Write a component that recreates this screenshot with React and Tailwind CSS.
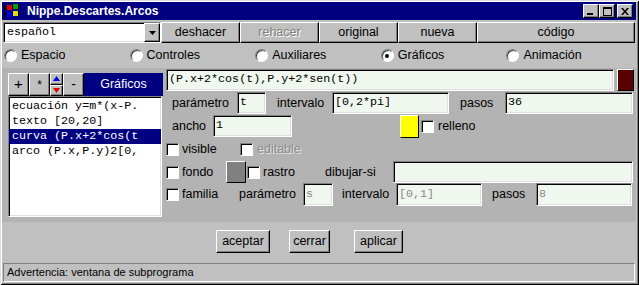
const raised =
  'bg-[#c0c0c0] border border-t-white border-l-white border-r-black border-b-black shadow-[inset_-1px_-1px_0_#808080]'
const sunken =
  'border border-t-[#808080] border-l-[#808080] border-r-white border-b-white shadow-[inset_1px_1px_0_#000,inset_-1px_-1px_0_#dfdfdf]'
const mono = "font-['Liberation_Mono',monospace] text-[11.7px]"

function Field({ className = '', children, disabled }) {
  return (
    <div
      className={`${sunken} bg-[#f0f7ef] flex items-center pl-[2px] ${mono} ${
        disabled ? 'text-[#8a8a8a]' : 'text-black'
      } ${className}`}
    >
      {children}
    </div>
  )
}

function Check() {
  return (
    <span className="block h-[13px] w-[13px] shrink-0 border border-t-[#808080] border-l-[#808080] border-r-white border-b-white bg-white shadow-[inset_1px_1px_0_#000]" />
  )
}

function Radio({ label, checked }) {
  return (
    <div className="flex items-center gap-[4px] pl-[1px]">
      <span className="flex h-[13px] w-[13px] items-center justify-center rounded-full border border-t-[#808080] border-l-[#808080] border-r-white border-b-white bg-white shadow-[inset_1px_1px_0_#404040]">
        {checked ? <span className="h-[4px] w-[4px] rounded-full bg-black" /> : null}
      </span>
      <span>{label}</span>
    </div>
  )
}

function Button({ className = '', children, disabled }) {
  return (
    <div className={`${raised} flex items-center justify-center ${className}`}>
      <span className={disabled ? 'text-[#808080] [text-shadow:1px_1px_0_#fff]' : ''}>
        {children}
      </span>
    </div>
  )
}

function WinIcon() {
  return (
    <svg width="16" height="14" viewBox="0 0 16 14">
      <rect x="0" y="1" width="2" height="5" fill="#000" />
      <rect x="3" y="1" width="5" height="5" fill="#e00000" />
      <rect x="9" y="0" width="5" height="5" fill="#00a000" />
      <rect x="0" y="8" width="2" height="5" fill="#000" />
      <rect x="3" y="8" width="5" height="5" fill="#0000e0" />
      <rect x="9" y="7" width="5" height="5" fill="#e0e000" />
      <rect x="14" y="0" width="1" height="12" fill="#000" />
    </svg>
  )
}

export default function App() {
  return (
    <div className="flex h-[285px] w-[639px] flex-col bg-[#c0c0c0] pl-[2px] pr-[3px] pt-[2px] pb-[2px] font-['Liberation_Sans',Arial,sans-serif] text-[12.5px] text-black shadow-[inset_1px_1px_0_#dfdfdf,inset_-1px_-1px_0_#000,inset_2px_2px_0_#fff,inset_-2px_-2px_0_#808080]">
      {/* title bar */}
      <div className="flex h-[18px] shrink-0 items-center bg-[#000080] pl-[2px] pr-[3px]">
        <WinIcon />
        <span className="ml-[7px] text-[12px] font-bold text-white">Nippe.Descartes.Arcos</span>
        <div className="ml-auto flex">
          <div className={`${raised} flex h-[14px] w-[16px] items-end pb-[2px] pl-[3px]`}>
            <span className="block h-[2px] w-[6px] bg-black" />
          </div>
          <div className={`${raised} flex h-[14px] w-[16px] items-center justify-center`}>
            <span className="block h-[9px] w-[9px] border border-t-2 border-black" />
          </div>
          <div className={`${raised} ml-[2px] flex h-[14px] w-[16px] items-center justify-center`}>
            <svg width="8" height="7" viewBox="0 0 8 7">
              <path d="M0 0h2l2 2.5L6 0h2L5 3.5 8 7H6L4 4.5 2 7H0l3-3.5z" fill="#000" />
            </svg>
          </div>
        </div>
      </div>

      {/* toolbar */}
      <div className="mt-[2px] flex h-[21px] shrink-0 px-[1px]">
        <div className={`${sunken} flex w-[158px] items-center bg-white`}>
          <span className={`${mono} flex-1 pl-[3px]`}>español</span>
          <div className={`${raised} flex h-full w-[16px] items-center justify-center`}>
            <svg width="7" height="4" viewBox="0 0 7 4">
              <path d="M0 0h7L3.5 4z" fill="#000" />
            </svg>
          </div>
        </div>
        <Button className="w-[79px]">deshacer</Button>
        <Button className="w-[79px]" disabled>
          rehacer
        </Button>
        <Button className="w-[79px]">original</Button>
        <Button className="w-[79px]">nueva</Button>
        <Button className="flex-1">código</Button>
      </div>

      {/* radios */}
      <div className="grid h-[25px] w-[630px] shrink-0 grid-cols-5 items-center px-[1px]">
        <Radio label="Espacio" />
        <Radio label="Controles" />
        <Radio label="Auxiliares" />
        <Radio label="Gráficos" checked />
        <Radio label="Animación" />
      </div>

      {/* main panel */}
      <div className="flex h-[154px] shrink-0 bg-[#b3b3b3]">
        <div className="w-[163px] shrink-0 pl-[6px] pt-[5px]">
          <div className="flex h-[23px] w-[155px]">
            <Button className="w-[21px] text-[15px]">+</Button>
            <Button className="w-[21px] text-[12px]">*</Button>
            <div className="flex w-[13px] flex-col">
              <div className={`${raised} flex flex-1 items-center justify-center`}>
                <svg width="7" height="5" viewBox="0 0 7 5">
                  <path d="M3.5 0L7 5H0z" fill="#0000e0" />
                </svg>
              </div>
              <div className={`${raised} flex flex-1 items-center justify-center`}>
                <svg width="7" height="5" viewBox="0 0 7 5">
                  <path d="M0 0h7L3.5 5z" fill="#e00000" />
                </svg>
              </div>
            </div>
            <Button className="w-[21px] text-[14px]">-</Button>
            <div className="flex flex-1 items-center justify-center bg-[#000080] text-white">Gráficos</div>
          </div>
          <div className={`${sunken} h-[121px] w-[154px] overflow-hidden bg-white pt-[2px] ${mono}`}>
            <div className="h-[15px] whitespace-nowrap pl-[3px] leading-[15px]">ecuación y=m*(x-P.</div>
            <div className="h-[15px] whitespace-nowrap pl-[3px] leading-[15px]">texto [20,20]</div>
            <div className="h-[15px] whitespace-nowrap bg-[#000080] pl-[3px] leading-[15px] text-white">
              curva (P.x+2*cos(t
            </div>
            <div className="h-[15px] whitespace-nowrap pl-[3px] leading-[15px]">arco (P.x,P.y)2[0,</div>
          </div>
        </div>

        <div className="flex flex-1 flex-col pt-[1px]">
          <div className="flex h-[22px] pl-[1px]">
            <Field className="w-[448px]">(P.x+2*cos(t),P.y+2*sen(t))</Field>
            <div className="ml-[3px] h-[22px] w-[17px] border border-t-white border-l-white border-r-black border-b-black bg-[#5a0000]" />
          </div>

          <div className="mt-[1px] flex h-[22px] items-center">
            <span className="w-[72px] pl-[7px]">parámetro</span>
            <Field className="h-full w-[29px]">t</Field>
            <span className="w-[66px] pl-[11px]">intervalo</span>
            <Field className="h-full w-[117px]">[0,2*pi]</Field>
            <span className="w-[56px] pl-[11px]">pasos</span>
            <Field className="h-full w-[128px]">36</Field>
          </div>

          <div className="mt-[1px] flex h-[22px] items-center">
            <span className="w-[48px] pl-[7px]">ancho</span>
            <Field className="h-full w-[79px]">1</Field>
            <div className="ml-[108px] h-[23px] w-[19px] border border-t-white border-l-white border-r-black border-b-black bg-[#ffff00]" />
            <span className="ml-[2px]">
              <Check />
            </span>
            <span className="ml-[4px]">relleno</span>
          </div>

          <div className="flex h-[24px] items-center pl-[1px]">
            <Check />
            <span className="ml-[3px] w-[58px]">visible</span>
            <Check />
            <span className="ml-[4px] text-[#8c8c8c] [text-shadow:1px_1px_0_#e6e6e6]">editable</span>
          </div>

          <div className="flex h-[22px] items-center pl-[1px]">
            <Check />
            <span className="ml-[3px] w-[44px]">fondo</span>
            <div className="h-[22px] w-[20px] border border-t-white border-l-white border-r-black border-b-black bg-[#808080]" />
            <span className="ml-[1px]">
              <Check />
            </span>
            <span className="ml-[3px] w-[62px]">rastro</span>
            <span className="w-[68px]">dibujar-si</span>
            <Field className="h-full w-[240px]" />
          </div>

          <div className="flex h-[23px] items-center pl-[1px]">
            <Check />
            <span className="ml-[3px] w-[57px]">familia</span>
            <span className="w-[64px]">parámetro</span>
            <Field className="h-full w-[30px]" disabled>
              s
            </Field>
            <span className="w-[63px] pl-[9px]">intervalo</span>
            <Field className="h-full w-[86px]" disabled>
              [0,1]
            </Field>
            <span className="w-[54px] pl-[10px]">pasos</span>
            <Field className="h-full w-[96px]" disabled>
              8
            </Field>
          </div>
        </div>
      </div>

      {/* bottom buttons */}
      <div className="flex h-[40px] shrink-0 pl-[214px] pt-[8px]">
        <Button className="h-[23px] w-[54px]">aceptar</Button>
        <Button className="ml-[19px] h-[23px] w-[41px]">cerrar</Button>
        <Button className="ml-[24px] h-[23px] w-[49px]">aplicar</Button>
      </div>

      {/* status */}
      <div className={`mx-[1px] mt-[1px] flex h-[19px] shrink-0 items-center border border-t-[#808080] border-l-[#808080] border-r-white border-b-white pl-[3px] text-[11px]`}>
        Advertencia: ventana de subprograma
      </div>
    </div>
  )
}
